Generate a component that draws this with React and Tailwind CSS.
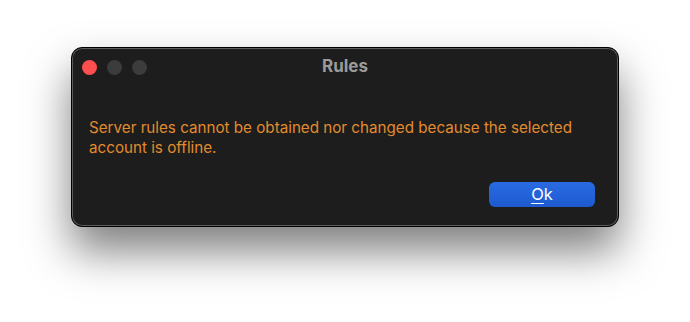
import React from "react";

export default function App() {
  return (
    <div className="w-[690px] h-[322px] bg-white overflow-hidden flex justify-center pt-[47px] font-['Inter','Noto_Sans',sans-serif]">
      <div className="w-[548px] h-[180px] rounded-[11px] bg-[#1c1d1c] border border-black ring-1 ring-inset ring-[#5c5c5c] shadow-[0_24px_44px_rgba(0,0,0,0.5)] flex flex-col">
        <div className="relative h-[38px] flex items-center px-[10px]">
          <div className="flex gap-[10px]">
            <span className="w-[15px] h-[15px] rounded-full bg-[#fe4f50]"></span>
            <span className="w-[15px] h-[15px] rounded-full bg-[#3b3c3b]"></span>
            <span className="w-[15px] h-[15px] rounded-full bg-[#3b3c3b]"></span>
          </div>
          <div className="absolute inset-0 flex items-center justify-center text-[17px] font-bold text-[#9b9b9b]">
            Rules
          </div>
        </div>
        <div className="px-[17px] pt-[32px] text-[15.2px] leading-[20px] text-[#e38b2f]">
          Server rules cannot be obtained nor changed because the selected
          <br />
          account is offline.
        </div>
        <div className="mt-auto flex justify-end px-[23px] pb-[19px]">
          <button className="w-[106px] h-[25px] rounded-[6px] bg-gradient-to-b from-[#2a6be2] to-[#1d5ad0] text-white text-[16.5px] leading-none flex items-center justify-center">
            <span><span className="underline underline-offset-[3px]">O</span>k</span>
          </button>
        </div>
      </div>
    </div>
  );
}
